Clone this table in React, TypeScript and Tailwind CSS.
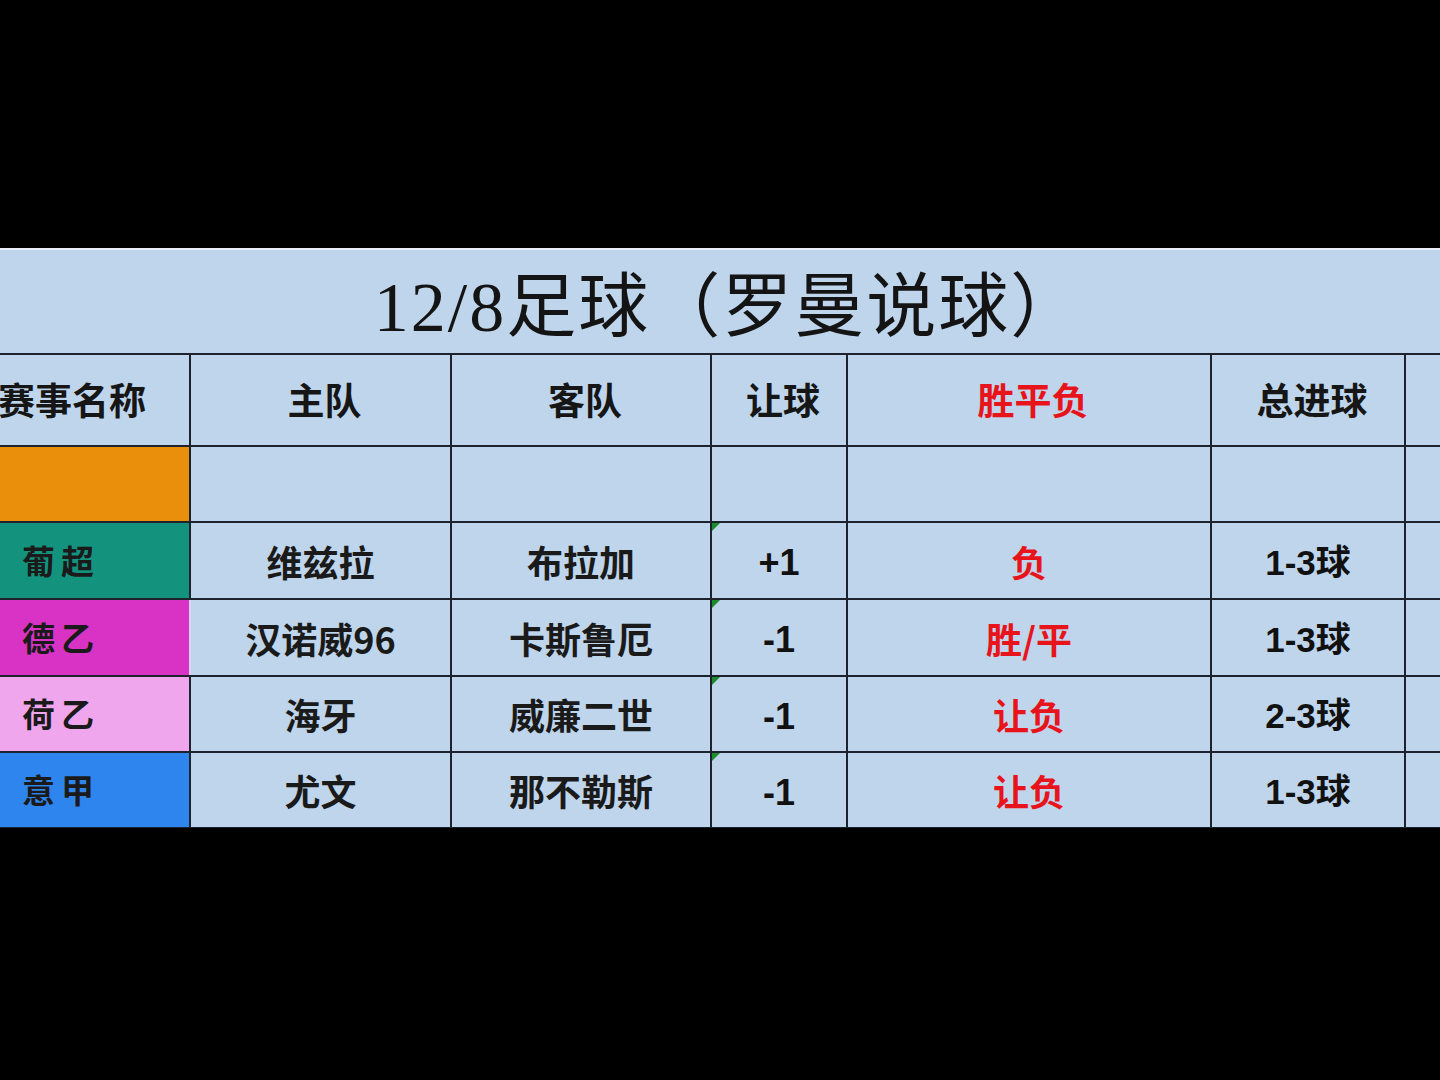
const cols = [
  "w-[244px]",
  "w-[261px]",
  "w-[260px]",
  "w-[136px]",
  "w-[364px]",
  "w-[194px]",
  "w-[160px]",
];

const cjk = { fontFamily: '"Noto Sans CJK SC", "Noto Sans", sans-serif' };
const latin = { fontFamily: '"Liberation Sans", "Noto Sans CJK SC", sans-serif' };

type Row = {
  league: string;
  color: string;
  home: string;
  away: string;
  handicap: string;
  result: string;
  goals: string;
  height: string;
  edge: string;
};

const rows: Row[] = [
  {
    league: "葡超",
    color: "bg-[#13937e]",
    home: "维兹拉",
    away: "布拉加",
    handicap: "+1",
    result: "负",
    goals: "1-3球",
    height: "h-[77px]",
    edge: "border-r-[#1c232c]",
  },
  {
    league: "德乙",
    color: "bg-[#d833c4]",
    home: "汉诺威96",
    away: "卡斯鲁厄",
    handicap: "-1",
    result: "胜/平",
    goals: "1-3球",
    height: "h-[77px]",
    edge: "border-r-[#d9d3f1]",
  },
  {
    league: "荷乙",
    color: "bg-[#f0a6ec]",
    home: "海牙",
    away: "威廉二世",
    handicap: "-1",
    result: "让负",
    goals: "2-3球",
    height: "h-[76px]",
    edge: "border-r-[#1c232c]",
  },
  {
    league: "意甲",
    color: "bg-[#2f85ee]",
    home: "尤文",
    away: "那不勒斯",
    handicap: "-1",
    result: "让负",
    goals: "1-3球",
    height: "h-[76px]",
    edge: "border-r-[#1c232c]",
  },
];

function Cell({
  width,
  className = "",
  children,
}: {
  width: string;
  className?: string;
  children?: React.ReactNode;
}) {
  return (
    <div
      className={`relative flex shrink-0 items-center justify-center border-r-2 border-[#1c232c] ${width} ${className}`}
    >
      {children}
    </div>
  );
}

// little green corner flag excel puts on numbers stored as text
function Mark() {
  return (
    <span className="absolute left-0 top-0 h-0 w-0 border-r-[8px] border-t-[8px] border-r-transparent border-t-[#1d8b2c]" />
  );
}

export default function App() {
  const headers = ["赛事名称", "主队", "客队", "让球", "胜平负", "总进球", ""];

  return (
    <div className="h-[1080px] w-[1440px] overflow-hidden bg-black">
      <div className="h-[248px]" />
      <div className="h-[580px] overflow-hidden border-t-2 border-[#e9f0f8] bg-[#bfd5ec]">
        <div
          className="flex h-[103px] items-center justify-center pl-[16px] pt-[12px] text-[70px] leading-none tracking-[2px] text-[#141414]"
          style={{ fontFamily: '"Liberation Serif", "Noto Sans CJK SC", serif' }}
        >
          12/8足球（罗曼说球）
        </div>

        <div className="-ml-[53px] w-[1600px] border-t-2 border-[#1c232c]">
          <div className="flex h-[92px] border-b-2 border-[#1c232c]">
            {headers.map((h, i) => (
              <Cell key={i} width={cols[i]}>
                <span
                  className={`pl-[8px] text-[37px] font-bold ${
                    i === 4 ? "text-[#e8141c]" : "text-[#161616]"
                  }`}
                  style={cjk}
                >
                  {h}
                </span>
              </Cell>
            ))}
          </div>

          <div className="flex h-[76px] border-b-2 border-[#1c232c]">
            <Cell width={cols[0]} className="bg-[#e98f0b]" />
            {cols.slice(1).map((w, i) => (
              <Cell key={i} width={w} />
            ))}
          </div>

          {rows.map((r) => (
            <div key={r.league} className={`flex ${r.height} border-b-2 border-[#1c232c]`}>
              <Cell width={cols[0]} className={`${r.color} ${r.edge} justify-start! pl-[75px]`}>
                <span className="text-[33px] font-bold tracking-[6px] text-[#1a1a1a]" style={cjk}>
                  {r.league}
                </span>
              </Cell>
              <Cell width={cols[1]}>
                <span className="text-[36px] font-bold text-[#1a1a1a]" style={cjk}>
                  {r.home}
                </span>
              </Cell>
              <Cell width={cols[2]}>
                <span className="text-[36px] font-bold text-[#1a1a1a]" style={cjk}>
                  {r.away}
                </span>
              </Cell>
              <Cell width={cols[3]}>
                <Mark />
                <span className="pt-[5px] text-[36px] font-bold text-[#111]" style={latin}>
                  {r.handicap}
                </span>
              </Cell>
              <Cell width={cols[4]}>
                <span className="text-[36px] font-bold text-[#e8141c]" style={cjk}>
                  {r.result}
                </span>
              </Cell>
              <Cell width={cols[5]}>
                <span className="pt-[5px] text-[35px] font-bold text-[#111]" style={latin}>
                  {r.goals}
                </span>
              </Cell>
              <Cell width={cols[6]} />
            </div>
          ))}
        </div>
      </div>
    </div>
  );
}
